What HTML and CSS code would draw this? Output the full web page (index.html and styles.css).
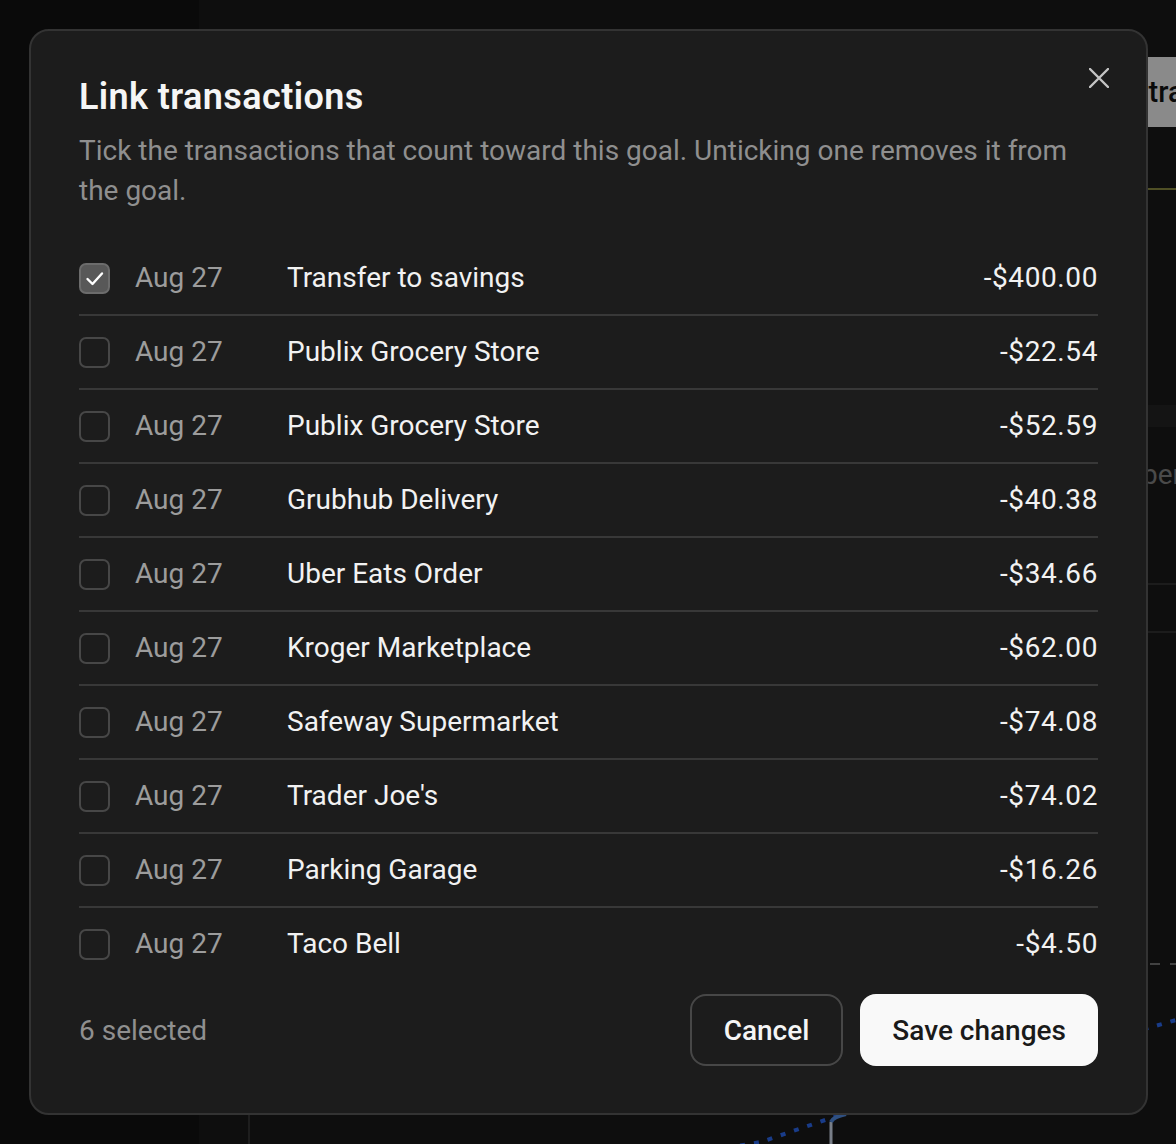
FILE: index.html
```html
<!DOCTYPE html>
<html lang="en">
<head>
    <meta charset="UTF-8">
    <meta name="viewport" content="width=device-width, initial-scale=1.0">
    <title>Emergency fund</title>
    <link rel="stylesheet" href="styles.css">
</head>
<body>

    <div class="app">
        <aside class="sidebar"></aside>

        <main class="main">
            <div class="page-head">
                <span class="page-icon"></span>
                <button class="head-button">Link transactions</button>
            </div>

            <div class="progress"><span style="width: 62%"></span></div>

            <section class="panel">
                <div class="panel-bar"></div>
                <div class="stats">
                    <i class="stat-bar"></i>
                    <i class="stat-bar"></i>
                    <i class="stat-bar"></i>
                    <span>per month</span>
                </div>
                <div class="panel-rule"></div>
            </section>

            <div class="chart">
                <svg width="1000" height="520" viewBox="0 0 1000 520">
                    <!-- target line -->
                    <line x1="0" y1="331" x2="1000" y2="331" stroke="#6f6f6f" stroke-width="2" stroke-dasharray="10 10"/>
                    <!-- projection -->
                    <polyline points="200,560 511,509 581,485 898,395 1000,366" fill="none" stroke="#2a64e4" stroke-width="4" stroke-dasharray="5 9"/>
                    <!-- actual balance -->
                    <path d="M581 520 L581 489" stroke="#c9d3e3" stroke-width="3" fill="none"/>
                    <path d="M581 489 Q583 484 596 481" stroke="#4f86d8" stroke-width="4" fill="none"/>
                </svg>
            </div>
        </main>
    </div>

    <div class="overlay">
        <div class="modal" role="dialog" aria-labelledby="modal-title">
            <button class="close-button" aria-label="Close">
                <svg width="20" height="20" viewBox="0 0 20 20">
                    <path d="M1 1 L19 19 M19 1 L1 19" stroke="#c4c4c4" stroke-width="2.4" stroke-linecap="round"/>
                </svg>
            </button>

            <h2 id="modal-title" class="modal-title">Link transactions</h2>
            <p class="modal-text">Tick the transactions that count toward this goal. Unticking one removes it from the goal.</p>

            <ul class="tx-list" id="tx-list"></ul>

            <div class="modal-footer">
                <span class="selected-count" id="selected-count">6 selected</span>
                <div class="actions">
                    <button class="btn btn-outline">Cancel</button>
                    <button class="btn btn-primary">Save changes</button>
                </div>
            </div>
        </div>
    </div>

    <script>
        const transactions = [
            { date: "Aug 27", name: "Transfer to savings", amount: "-$400.00", linked: true },
            { date: "Aug 27", name: "Publix Grocery Store", amount: "-$22.54" },
            { date: "Aug 27", name: "Publix Grocery Store", amount: "-$52.59" },
            { date: "Aug 27", name: "Grubhub Delivery", amount: "-$40.38" },
            { date: "Aug 27", name: "Uber Eats Order", amount: "-$34.66" },
            { date: "Aug 27", name: "Kroger Marketplace", amount: "-$62.00" },
            { date: "Aug 27", name: "Safeway Supermarket", amount: "-$74.08" },
            { date: "Aug 27", name: "Trader Joe's", amount: "-$74.02" },
            { date: "Aug 27", name: "Parking Garage", amount: "-$16.26" },
            { date: "Aug 27", name: "Taco Bell", amount: "-$4.50" }
        ];

        const checkMark = '<svg width="31" height="31" viewBox="0 0 31 31"><path d="M8.5 16 L13.5 21 L23 10.5" fill="none" stroke="#fff" stroke-width="2.4" stroke-linecap="round" stroke-linejoin="round"/></svg>';

        const list = document.getElementById("tx-list");

        transactions.forEach(tx => {
            const row = document.createElement("li");
            row.className = "tx-row";
            row.innerHTML = `
                <span class="checkbox${tx.linked ? " checked" : ""}">${tx.linked ? checkMark : ""}</span>
                <span class="tx-date">${tx.date}</span>
                <span class="tx-name">${tx.name}</span>
                <span class="tx-amount">${tx.amount}</span>
            `;
            row.querySelector(".checkbox").onclick = function() {
                this.classList.toggle("checked");
                this.innerHTML = this.classList.contains("checked") ? checkMark : "";
            };
            list.appendChild(row);
        });
    </script>

</body>
</html>
```

FILE: styles.css
```css
body {
    margin: 0;
    font-family: Roboto, "Noto Sans", sans-serif;
    background-color: #181818;
    overflow: hidden;
}

.app {
    display: flex;
    height: 100vh;
}

.sidebar {
    width: 199px;
    flex-shrink: 0;
    background-color: #111;
}

.main {
    flex: 1;
    padding: 57px 0 0 49px;
    overflow: hidden;
}

.page-head {
    display: flex;
    justify-content: space-between;
    align-items: center;
    width: 1082px;
    height: 70px;
}

.page-icon {
    width: 40px;
    height: 40px;
    border-radius: 10px;
    background-color: #262626;
}

.head-button {
    height: 70px;
    padding: 0 20px;
    background-color: #e6e6e6;
    color: #111;
    border: none;
    border-radius: 12px;
    font-family: inherit;
    font-size: 29px;
    font-weight: 500;
    white-space: nowrap;
}

.progress {
    margin-top: 61px;
    height: 2px;
    width: 1100px;
    background-color: #333;
}

.progress span {
    display: block;
    height: 100%;
    background-color: #84843e;
}

.progress span {
    width: 100% !important;
}

.panel {
    margin-top: 215px;
}

.panel-bar {
    height: 22px;
    background-color: #222;
    width: 1100px;
}

.stats {
    display: grid;
    grid-template-columns: repeat(4, 298px);
    align-items: center;
    margin-top: 28px;
    line-height: 40px;
    font-size: 28px;
    color: #7c7c7c;
    white-space: nowrap;
}

.stat-bar {
    display: block;
    width: 120px;
    height: 12px;
    border-radius: 6px;
    background-color: #262626;
}

.panel-rule {
    margin-top: 88px;
    height: 46px;
    width: 1100px;
    border-top: 2px solid #2f2f2f;
    border-bottom: 2px solid #2f2f2f;
}

.chart {
    border-left: 2px solid #323232;
    height: 520px;
}

.chart svg {
    display: block;
}

/* Modal */
.overlay {
    position: fixed;
    inset: 0;
    background-color: rgba(0, 0, 0, 0.4);
}

.modal {
    position: absolute;
    top: 29px;
    left: 29px;
    width: 1119px;
    box-sizing: border-box;
    padding: 43px 48px 47px;
    background-color: #1c1c1c;
    border: 2px solid #333;
    border-radius: 20px;
    color: #f2f2f2;
}

.close-button {
    position: absolute;
    top: 27px;
    right: 27px;
    width: 40px;
    height: 40px;
    padding: 0;
    display: flex;
    align-items: center;
    justify-content: center;
    background: none;
    border: none;
    cursor: pointer;
}

.modal-title {
    margin: 0 0 10px;
    font-size: 36px;
    line-height: 47px;
    font-weight: 600;
    letter-spacing: 0.4px;
    color: #f5f5f5;
}

.modal-text {
    margin: 0;
    font-size: 28px;
    line-height: 40px;
    color: #8f8f8f;
}

.tx-list {
    list-style: none;
    margin: 31px 0 0;
    padding: 0;
}

.tx-row {
    display: grid;
    grid-template-columns: 56px 152px 1fr auto;
    align-items: center;
    height: 72px;
    font-size: 28px;
    line-height: 40px;
}

.tx-row + .tx-row {
    border-top: 2px solid #383838;
}

.checkbox {
    width: 31px;
    height: 31px;
    box-sizing: border-box;
    border: 2px solid #474747;
    border-radius: 7px;
    cursor: pointer;
}

.checkbox.checked {
    background-color: #585858;
    border-color: #6c6c6c;
}

.checkbox svg {
    display: block;
    margin: -2px;
}

.tx-date {
    color: #9c9c9c;
}

.tx-name {
    color: #f2f2f2;
}

.tx-amount {
    color: #f2f2f2;
    text-align: right;
    letter-spacing: 0.6px;
    font-variant-numeric: tabular-nums;
}

.modal-footer {
    display: flex;
    justify-content: space-between;
    align-items: center;
    margin-top: 14px;
}

.selected-count {
    font-size: 28px;
    color: #8f8f8f;
}

.actions {
    display: flex;
    gap: 17px;
}

.btn {
    height: 72px;
    padding: 0 32px;
    border-radius: 16px;
    font-family: inherit;
    font-size: 28px;
    font-weight: 500;
    cursor: pointer;
}

.btn-outline {
    background: none;
    border: 2px solid #474747;
    color: #f5f5f5;
}

.btn-primary {
    background-color: #f9f9f9;
    border: none;
    color: #1a1a1a;
}

.btn-primary:hover {
    background-color: #e8e8e8;
}
```
